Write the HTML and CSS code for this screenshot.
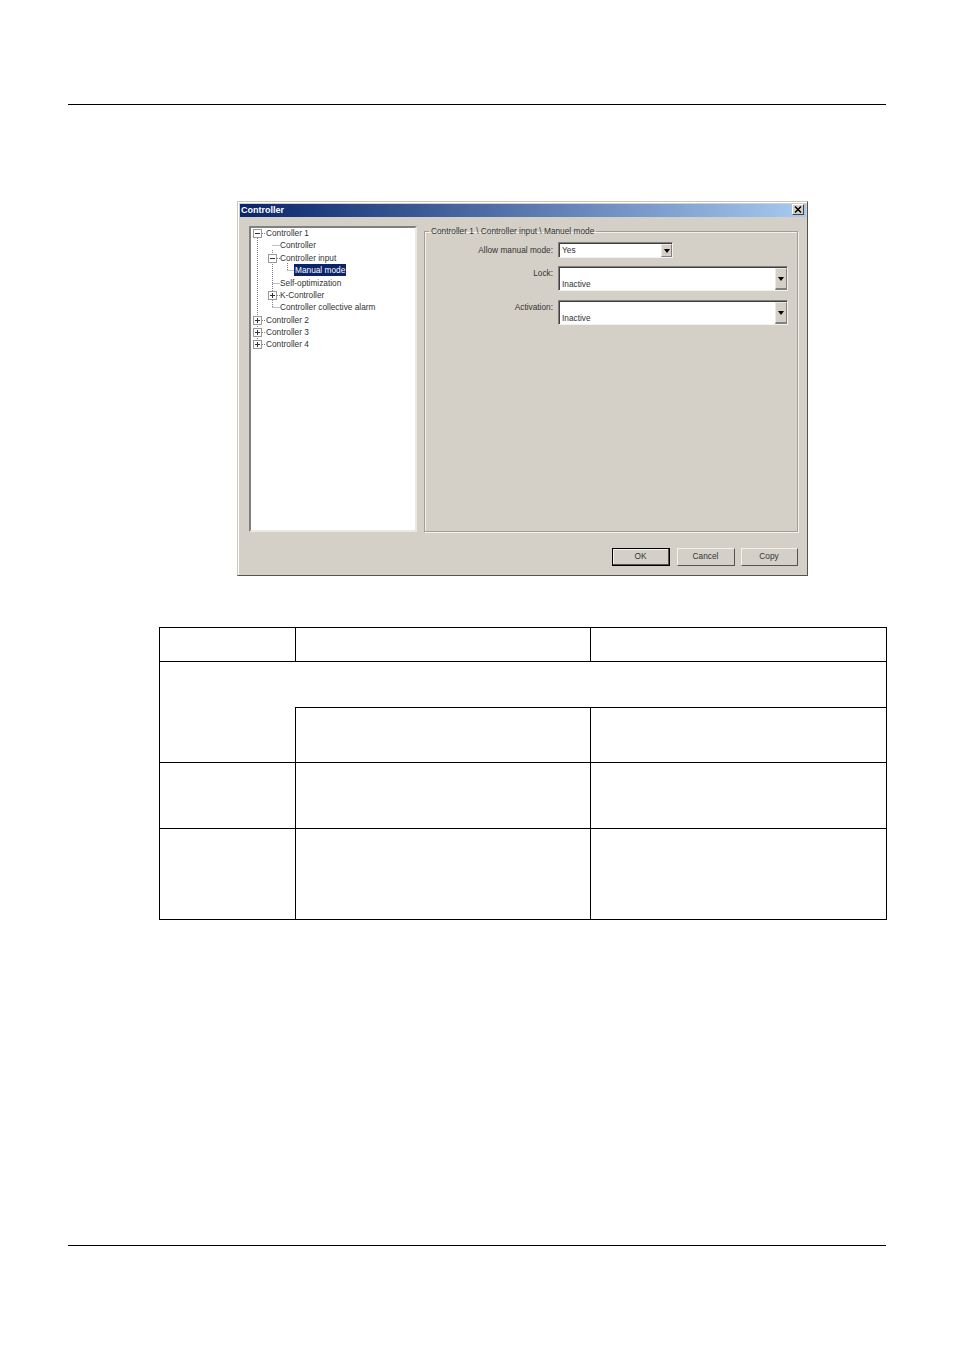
FILE: index.html

```html
<!DOCTYPE html>
<html lang="en">
<head>
  <meta charset="UTF-8">
  <title>Controller</title>
  <link rel="stylesheet" href="styles.css">
</head>
<body>
  <div class="page-head"></div>

  <div class="dialog">
    <div class="title-bar">
      <span class="title-text">Controller</span>
      <span class="close-button">
        <svg width="8" height="7" viewBox="0 0 8 7"><path d="M1 0.5L7 6.5M7 0.5L1 6.5" stroke="#000" stroke-width="1.5" fill="none"/></svg>
      </span>
    </div>

    <div class="dialog-body">
      <div class="tree">
        <!-- dotted connectors and expanders -->
        <svg class="tree-lines" width="110" height="130" viewBox="0 0 110 130">
          <g stroke="#808080" stroke-width="1" stroke-dasharray="1 1" fill="none">
            <path d="M6.5 10V114"/>
            <path d="M11 5.5H15M11 92.5H15M11 104.5H15M11 116.5H15"/>
            <path d="M21.5 22V80"/>
            <path d="M21.5 17.5H29M26 30.5H29M21.5 55.5H29M26 67.5H29M21.5 79.5H29"/>
            <path d="M36.5 35V43M36.5 42.5H43"/>
          </g>
          <g fill="#fff" stroke="#999" stroke-width="1">
            <rect x="2.5" y="1.5" width="8" height="8"/>
            <rect x="17.5" y="26.5" width="8" height="8"/>
            <rect x="17.5" y="63.5" width="8" height="8"/>
            <rect x="2.5" y="88.5" width="8" height="8"/>
            <rect x="2.5" y="100.5" width="8" height="8"/>
            <rect x="2.5" y="112.5" width="8" height="8"/>
          </g>
          <path d="M4 5.5H9M19 30.5H24M19 67.5H24M21.5 65V70M4 92.5H9M6.5 90V95M4 104.5H9M6.5 102V107M4 116.5H9M6.5 114V119" stroke="#333" stroke-width="1" fill="none"/>
        </svg>
        <div class="tree-row level-0">Controller 1</div>
        <div class="tree-row level-1">Controller</div>
        <div class="tree-row level-1">Controller input</div>
        <div class="tree-row level-2"><span class="selected">Manual mode</span></div>
        <div class="tree-row level-1">Self-optimization</div>
        <div class="tree-row level-1">K-Controller</div>
        <div class="tree-row level-1">Controller collective alarm</div>
        <div class="tree-row level-0">Controller 2</div>
        <div class="tree-row level-0">Controller 3</div>
        <div class="tree-row level-0">Controller 4</div>
      </div>

      <fieldset class="group">
        <legend>Controller 1 \ Controller input \ Manuel mode</legend>

        <div class="form-row first">
          <label>Allow manual mode:</label>
          <div class="combo small">
            <span class="combo-text">Yes</span>
            <span class="combo-arrow"></span>
          </div>
        </div>

        <div class="form-row second">
          <label>Lock:</label>
          <div class="combo big">
            <span class="combo-text">Inactive</span>
            <span class="combo-arrow"></span>
          </div>
        </div>

        <div class="form-row">
          <label>Activation:</label>
          <div class="combo big">
            <span class="combo-text">Inactive</span>
            <span class="combo-arrow"></span>
          </div>
        </div>
      </fieldset>
    </div>

    <div class="dialog-buttons">
      <button class="win-button default">OK</button>
      <button class="win-button">Cancel</button>
      <button class="win-button copy">Copy</button>
    </div>
  </div>

  <table class="info-table">
    <colgroup>
      <col class="col-a">
      <col class="col-b">
      <col class="col-c">
    </colgroup>
    <tr class="row-1"><td></td><td></td><td></td></tr>
    <tr class="row-2"><td class="no-bottom" colspan="3"></td></tr>
    <tr class="row-3"><td class="no-top"></td><td class="line-top"></td><td class="line-top"></td></tr>
    <tr class="row-4"><td></td><td></td><td></td></tr>
    <tr class="row-5"><td></td><td></td><td></td></tr>
  </table>

  <div class="page-foot"></div>
</body>
</html>
```

FILE: styles.css

```css
body {
  margin: 0;
  background: #fff;
  font-family: "Liberation Sans", Arial, sans-serif;
  font-size: 8.3px;
  color: #333;
}

.page-head {
  height: 104px;
  margin: 0 68px;
  border-bottom: 1px solid #000;
}

.page-foot {
  margin: 325px 68px 0;
  border-top: 1px solid #000;
}

.dialog {
  box-sizing: border-box;
  width: 571px;
  height: 375px;
  margin: 96px 0 0 237px;
  padding: 2px 1px 1px 2px;
  background: #d4d0c8;
  border: 1px solid;
  border-color: #c9c6bf #55534f #55534f #c9c6bf;
  box-shadow: inset 1px 1px 0 #fff;
}

.title-bar {
  display: flex;
  justify-content: space-between;
  height: 13px;
  padding: 0 2px 0 1px;
  background: linear-gradient(to right, #0a246a, #a6caf0);
  color: #fff;
  font-size: 9px;
  font-weight: bold;
  line-height: 13px;
}

.close-button {
  display: flex;
  align-items: center;
  justify-content: center;
  box-sizing: border-box;
  width: 12px;
  height: 11px;
  background: #d4d0c8;
  border: 1px solid;
  border-color: #fff #404040 #404040 #fff;
}

.dialog-body {
  display: flex;
  gap: 7px;
  padding: 9px 8px 0 9px;
}

.tree {
  position: relative;
  box-sizing: border-box;
  width: 168px;
  height: 306px;
  background: #fff;
  border: 2px solid;
  border-color: #808080 #ece9e2 #ece9e2 #808080;
}

.tree-lines {
  position: absolute;
  left: 0;
  top: 0;
}

.tree-row {
  position: relative;
  height: 12.38px;
  line-height: 12px;
  white-space: nowrap;
}

.tree-row:first-of-type {
  margin-top: -1px;
}

.level-0 { padding-left: 15px; }
.level-1 { padding-left: 29px; }
.level-2 { padding-left: 43px; }

.selected {
  display: inline-block;
  padding: 0 1px;
  background: #0a246a;
  color: #fff;
}

.group {
  box-sizing: border-box;
  width: 374px;
  height: 306px;
  margin: 0;
  padding: 0 9px 0 0;
  border: 1px solid #a09e97;
  box-shadow: inset 1px 1px 0 #f4f2ec, 1px 1px 0 #f4f2ec;
}

.group legend {
  margin-left: 4px;
  padding: 0 2px;
  line-height: 11px;
}

.form-row {
  display: flex;
  gap: 5px;
  margin-top: 9px;
}

.form-row.first {
  margin-top: 5px;
}

.form-row.second {
  margin-top: 8px;
}

.form-row label {
  width: 128px;
  padding-top: 1px;
  text-align: right;
  line-height: 12px;
}

.form-row.first label {
  padding-top: 2px;
}

.combo {
  display: flex;
  box-sizing: border-box;
  background: #fff;
  border: 1px solid;
  border-color: #808080 #f4f2ec #f4f2ec #808080;
  box-shadow: inset 1px 1px 0 #404040;
}

.combo.small {
  width: 115px;
  height: 16px;
}

.combo.big {
  width: 230px;
  height: 25px;
}

.combo-text {
  flex: 1;
  align-self: flex-end;
  padding: 0 0 0 3px;
  line-height: 12px;
}

.combo.small .combo-text {
  padding-bottom: 1px;
}

.combo-arrow {
  position: relative;
  box-sizing: border-box;
  width: 11px;
  margin: 1px 0 0;
  background: #d4d0c8;
  border: 1px solid;
  border-color: #ece9e2 #808080 #808080 #ece9e2;
}

.combo.big .combo-arrow {
  width: 12px;
  border-bottom-width: 2px;
}

.combo-arrow::after {
  content: "";
  position: absolute;
  left: 50%;
  top: 50%;
  margin: -2px 0 0 -3px;
  border: 3px solid transparent;
  border-top: 4px solid #000;
  border-bottom: 0;
}

.dialog-buttons {
  display: flex;
  justify-content: flex-end;
  gap: 6px;
  padding: 16px 8px 0 0;
}

.win-button {
  box-sizing: border-box;
  width: 58px;
  height: 18px;
  padding: 0 1px 2px 0;
  background: #d4d0c8;
  border: 1px solid;
  border-color: #f4f2ec #55534f #55534f #f4f2ec;
  font: inherit;
  color: inherit;
}

.win-button.copy {
  width: 57px;
}

.win-button.default {
  margin-right: 1px;
  border: 1px solid #000;
  box-shadow: inset -1px -1px 0 #55534f, inset 1px 1px 0 #f4f2ec;
}

.info-table {
  box-sizing: border-box;
  table-layout: fixed;
  width: 728px;
  margin: 51px 0 0 159px;
  border-collapse: collapse;
}

.info-table td {
  padding: 0;
  border: 1px solid #000;
}

.info-table td.no-bottom {
  border-bottom: 0;
}

.info-table td.no-top {
  border-top: 0;
}

.col-a { width: 136px; }
.col-b { width: 295px; }
.col-c { width: 296px; }

.row-1 { height: 34px; }
.row-2 { height: 46px; }
.row-3 { height: 55px; }
.row-4 { height: 66px; }
.row-5 { height: 91px; }
```
